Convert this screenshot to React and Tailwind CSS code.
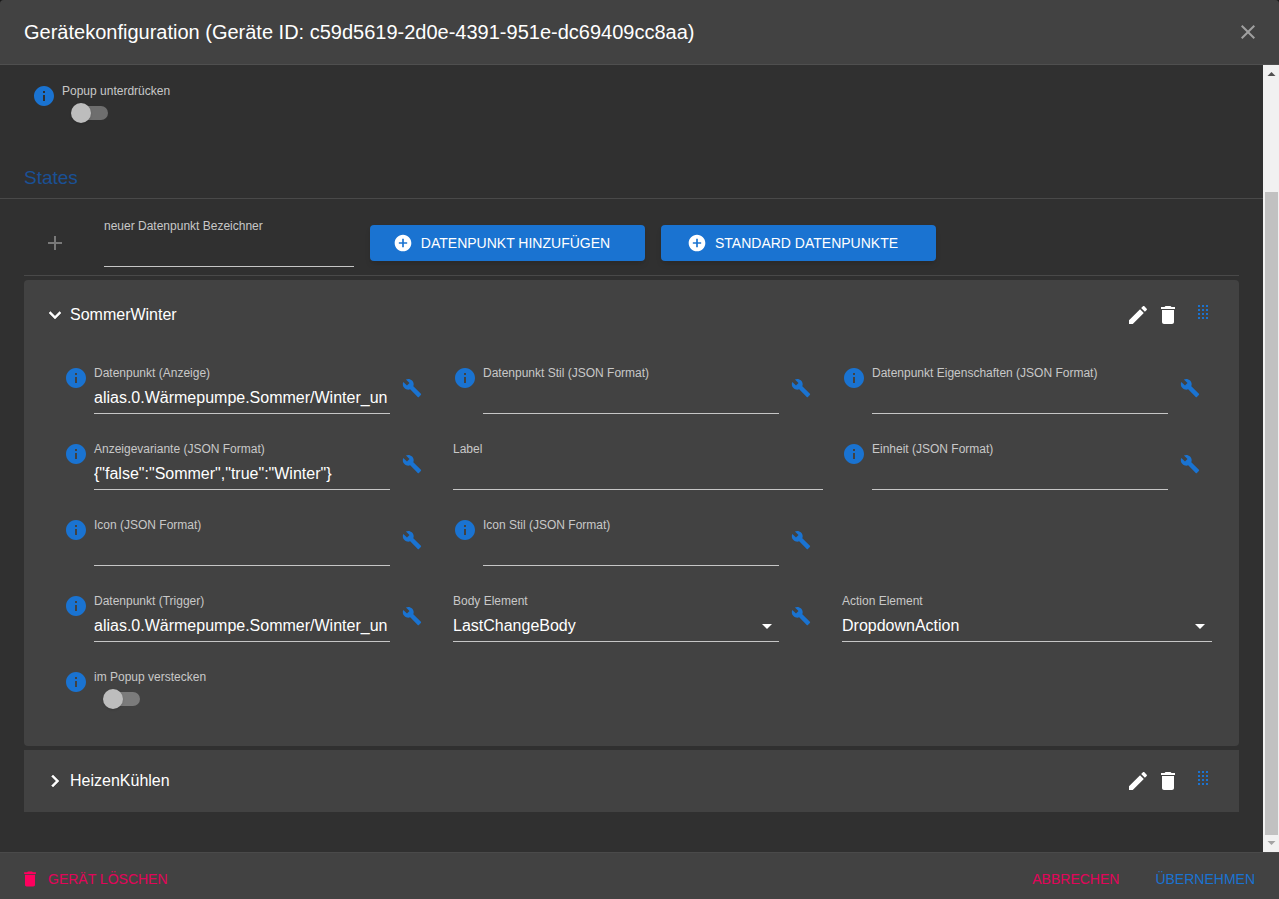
import React, { useId } from "react";

const INFO = "M12 2C6.48 2 2 6.48 2 12s4.48 10 10 10 10-4.48 10-10S17.52 2 12 2zm1 15h-2v-6h2v6zm0-8h-2V7h2v2z";
const BUILD = "M22.7 19l-9.1-9.1c.9-2.3.4-5-1.5-6.9-2-2-5-2.4-7.4-1.3L9 6 6 9 1.6 4.7C.4 7.1.9 10.1 2.9 12.1c1.9 1.9 4.6 2.4 6.9 1.5l9.1 9.1c.4.4 1 .4 1.4 0l2.3-2.3c.5-.4.5-1.1.1-1.4z";
const DELETE = "M6 19c0 1.1.9 2 2 2h8c1.1 0 2-.9 2-2V7H6v12zM19 4h-3.5l-1-1h-5l-1 1H5v2h14V4z";
const EDIT = "M3 17.25V21h3.75L17.81 9.94l-3.75-3.75L3 17.25zM20.71 7.04c.39-.39.39-1.02 0-1.41l-2.34-2.34c-.39-.39-1.02-.39-1.41 0l-1.83 1.83 3.75 3.75 1.83-1.83z";
const ADD = "M19 13h-6v6h-2v-6H5v-2h6V5h2v6h6v2z";
const ADD_CIRCLE = "M12 2C6.48 2 2 6.48 2 12s4.48 10 10 10 10-4.48 10-10S17.52 2 12 2zm5 11h-4v4h-2v-4H7v-2h4V7h2v4h4v2z";
const CLOSE = "M19 6.41L17.59 5 12 10.59 6.41 5 5 6.41 10.59 12 5 17.59 6.41 19 12 13.41 17.59 19 19 17.59 13.41 12z";
const EXPAND = "M16.59 8.59L12 13.17 7.41 8.59 6 10l6 6 6-6z";
const CHEVRON = "M10 6L8.59 7.41 13.17 12l-4.58 4.59L10 18l6-6z";
const DROPDOWN = "M7 10l5 5 5-5z";

function Icon({ d, className = "size-6", strokeWidth = 0 }) {
  return (
    <svg viewBox="0 0 24 24" fill="currentColor" stroke="currentColor" strokeWidth={strokeWidth} aria-hidden="true" className={`shrink-0 ${className}`}>
      <path d={d} />
    </svg>
  );
}

function InfoButton() {
  return (
    <button type="button" aria-label="Info" className="mr-1.5 size-6 shrink-0 text-[#1a73d1]">
      <Icon d={INFO} />
    </button>
  );
}

const labelClass = "block text-xs leading-[14px] whitespace-nowrap text-[#c8c8c8]";
const controlClass = "block h-[34px] w-full min-w-0 appearance-none rounded-none border-b border-[#c6c6c6] bg-transparent pt-0.5 text-base text-white outline-none";

function Field({ label, value = "", info, wrench, options }) {
  const id = useId();
  return (
    <div className="flex items-start">
      {info && <InfoButton />}
      <div className="min-w-0 flex-1">
        <label htmlFor={id} className={labelClass}>{label}</label>
        {options ? (
          <div className="relative">
            <select id={id} defaultValue={value} className={controlClass}>
              {options.map((o) => <option key={o}>{o}</option>)}
            </select>
            <Icon d={DROPDOWN} className="pointer-events-none absolute top-1.5 right-0 size-6 text-white" />
          </div>
        ) : (
          <input id={id} type="text" defaultValue={value} className={controlClass} />
        )}
      </div>
      {wrench && (
        <button type="button" aria-label={`${label} bearbeiten`} className="shrink-0 p-3 text-[#1a73d1]">
          <Icon d={BUILD} className="size-5" />
        </button>
      )}
    </div>
  );
}

function SwitchField({ label, track }) {
  const id = useId();
  return (
    <div className="flex items-start">
      <InfoButton />
      <div>
        <label htmlFor={id} className={labelClass}>{label}</label>
        <div className="flex px-[9px] py-[5px]">
          <div className="relative flex h-5 w-[37px] items-center justify-end">
            <input id={id} type="checkbox" role="switch" className={`peer h-3.5 w-[34px] appearance-none rounded-full ${track}`} />
            <span className="pointer-events-none absolute left-0 size-5 rounded-full bg-[#bdbdbd] shadow-sm peer-checked:left-[17px]" />
          </div>
        </div>
      </div>
    </div>
  );
}

function DotHandle() {
  return (
    <button type="button" aria-label="Verschieben" className="size-6 text-[#1a73d1]">
      <svg viewBox="0 0 24 24" fill="currentColor" aria-hidden="true" className="size-6" shapeRendering="crispEdges">
        {[2, 6, 10, 14].map((y) => [7, 11, 15].map((x) => <rect key={`${x}-${y}`} x={x} y={y} width="2" height="2" />))}
      </svg>
    </button>
  );
}

function PanelHeader({ title, open }) {
  return (
    <div className="flex items-center pr-6 pl-[19px]">
      <button type="button" aria-expanded={open} className="flex flex-1 items-center gap-[3px] text-left text-base text-white">
        <Icon d={open ? EXPAND : CHEVRON} strokeWidth={0.5} />
        {title}
      </button>
      <div className="flex items-center gap-1.5 text-white">
        <button type="button" aria-label="Bearbeiten"><Icon d={EDIT} /></button>
        <button type="button" aria-label="Löschen"><Icon d={DELETE} /></button>
        <div className="flex pl-[5px]"><DotHandle /></div>
      </div>
    </div>
  );
}

function BlueButton({ children }) {
  return (
    <button type="button" className="flex h-9 w-[275px] items-center justify-center gap-2 rounded bg-[#1a73d1] pr-3 text-sm font-normal text-white uppercase shadow-md">
      <Icon d={ADD_CIRCLE} className="size-5" />
      {children}
    </button>
  );
}

function Scrollbar() {
  return (
    <div aria-hidden="true" className="flex w-4 shrink-0 flex-col bg-[#f1f1f1]">
      <svg viewBox="0 0 16 17" className="h-[17px] w-4"><path d="M4.5 11h8l-4-4z" fill="#505050" /></svg>
      <div className="flex-[110]" />
      <div className="mr-px ml-0.5 flex-[643] bg-[#c1c1c1]" />
      <svg viewBox="0 0 16 17" className="h-[17px] w-4"><path d="M4.5 6h8l-4 4z" fill="#a3a3a3" /></svg>
    </div>
  );
}

const DATAPOINT = "alias.0.Wärmepumpe.Sommer/Winter_un";

export default function App() {
  return (
    <div className="min-h-screen bg-[#181818] font-['Liberation_Sans',Arial,sans-serif]">
      <div role="dialog" aria-labelledby="dialog-title" className="flex min-h-screen flex-col overflow-hidden rounded-t bg-[#303030]">
        <header className="flex items-center justify-between border-b border-[#4f4f4f] bg-[#424242] py-4 pr-[19px] pl-6">
          <h1 id="dialog-title" className="text-xl leading-8 text-white">
            Gerätekonfiguration (Geräte ID: c59d5619-2d0e-4391-951e-dc69409cc8aa)
          </h1>
          <button type="button" aria-label="Schließen" className="text-[#a0a0a0]"><Icon d={CLOSE} /></button>
        </header>

        <div className="flex flex-1">
          <main className="min-w-0 flex-1 pb-10">
            <div className="pt-[19px] pl-8">
              <SwitchField label="Popup unterdrücken" track="bg-[#6e6e6e]" />
            </div>

            <h2 className="mt-[38px] border-b border-[#494949] px-6 pb-2 text-[19px] leading-6 text-[#1a5096]">States</h2>

            <div className="px-6">
              <div className="flex items-start border-b border-[#494949] pt-5 pb-2">
                <button type="button" aria-label="Hinzufügen" disabled className="mt-3 mr-[37px] ml-[19px] text-[#797979]"><Icon d={ADD} /></button>
                <div className="w-[250px]"><Field label="neuer Datenpunkt Bezeichner" /></div>
                <div className="mt-1.5 ml-4 flex gap-4">
                  <BlueButton>Datenpunkt hinzufügen</BlueButton>
                  <BlueButton>Standard Datenpunkte</BlueButton>
                </div>
              </div>

              <section className="mt-1 rounded bg-[#424242] pt-[23px] pb-8">
                <PanelHeader title="SommerWinter" open />
                <div className="mt-[39px] grid grid-cols-3 gap-x-[19px] gap-y-7 pr-[27px] pl-10">
                  <Field label="Datenpunkt (Anzeige)" value={DATAPOINT} info wrench />
                  <Field label="Datenpunkt Stil (JSON Format)" info wrench />
                  <Field label="Datenpunkt Eigenschaften (JSON Format)" info wrench />
                  <Field label="Anzeigevariante (JSON Format)" value={'{"false":"Sommer","true":"Winter"}'} info wrench />
                  <Field label="Label" />
                  <Field label="Einheit (JSON Format)" info wrench />
                  <Field label="Icon (JSON Format)" info wrench />
                  <Field label="Icon Stil (JSON Format)" info wrench />
                  <div />
                  <Field label="Datenpunkt (Trigger)" value={DATAPOINT} info wrench />
                  <Field label="Body Element" value="LastChangeBody" options={["LastChangeBody"]} wrench />
                  <Field label="Action Element" value="DropdownAction" options={["DropdownAction"]} />
                  <SwitchField label="im Popup verstecken" track="bg-[#7b7b7b]" />
                </div>
              </section>

              <section className="mt-1 bg-[#424242] py-[19px]">
                <PanelHeader title="HeizenKühlen" open={false} />
              </section>
            </div>
          </main>
          <Scrollbar />
        </div>

        <footer className="flex items-center justify-between border-t border-[#4a4a4a] bg-[#424242] pt-4 pr-6 pb-2.5 pl-5 text-sm">
          <button type="button" className="flex items-center gap-2 text-[#e2045a] uppercase">
            <Icon d={DELETE} className="size-5 text-[#ff005e]" />
            Gerät löschen
          </button>
          <div className="flex gap-9">
            <button type="button" className="text-[#e2045a] uppercase">Abbrechen</button>
            <button type="button" className="text-[#1a73d1] uppercase">Übernehmen</button>
          </div>
        </footer>
      </div>
    </div>
  );
}
